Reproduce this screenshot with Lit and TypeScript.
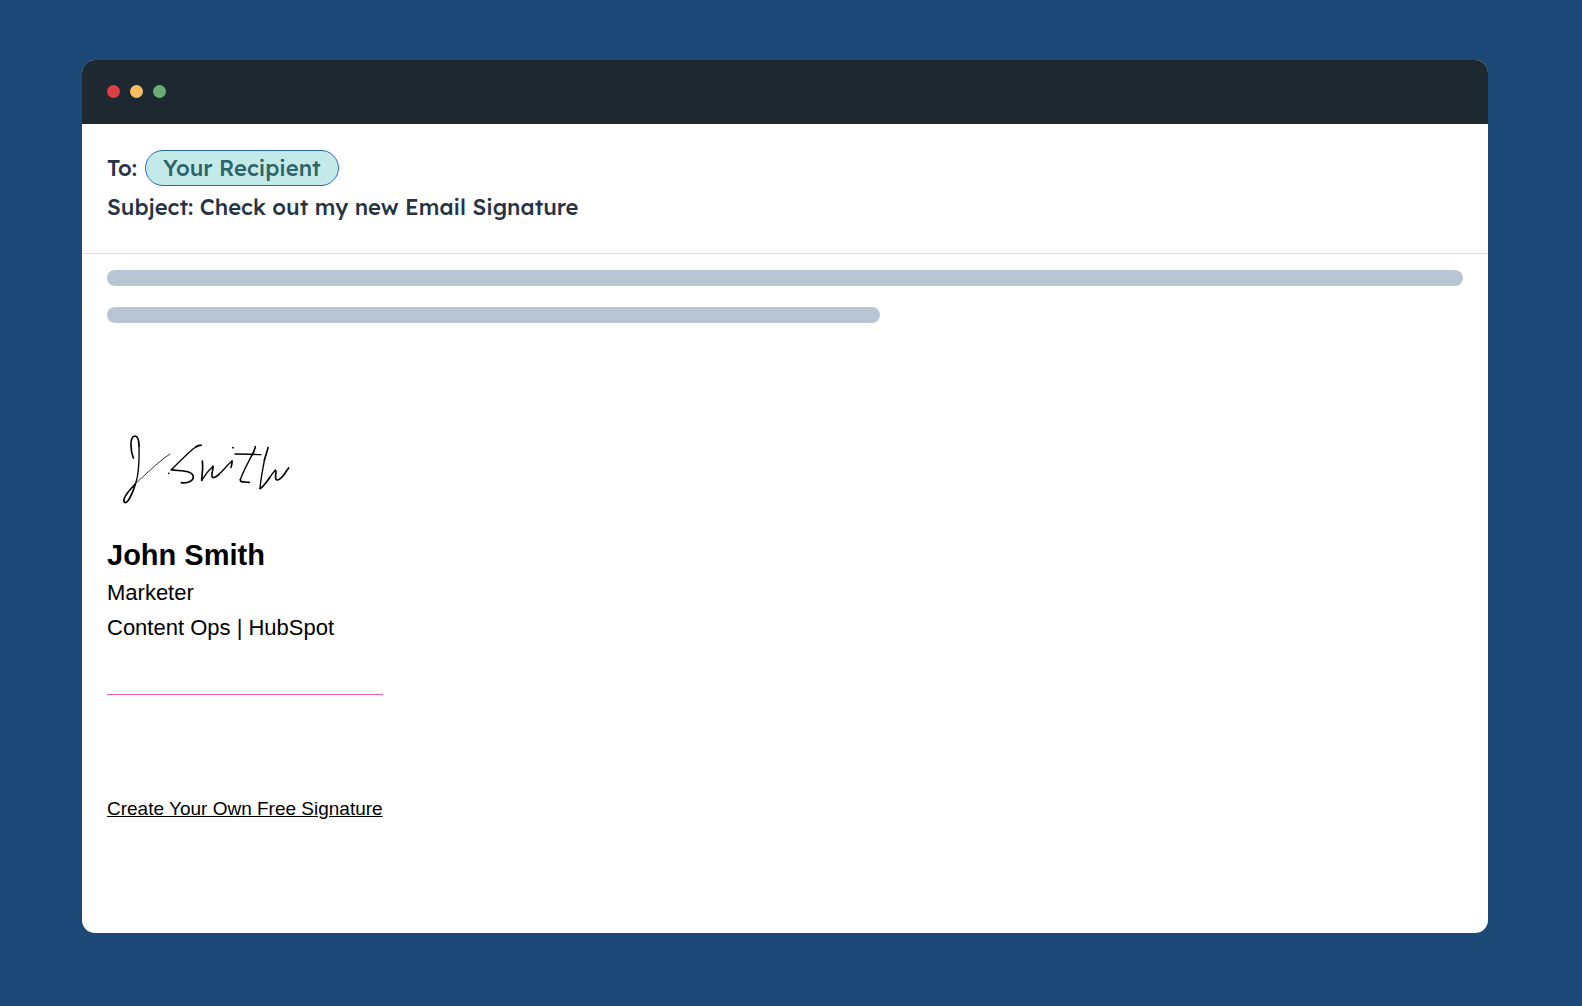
import { LitElement, html, css } from "lit";
import { customElement } from "lit/decorators.js";

@customElement("signature-drawing")
export class SignatureDrawing extends LitElement {
  static styles = css`
    :host {
      display: block;
    }
    .ink {
      display: block;
      width: 185px;
      height: 80px;
      fill: none;
      stroke: #000;
      stroke-linecap: round;
      stroke-linejoin: round;
    }
    .thick {
      stroke-width: 5;
    }
    .medium {
      stroke-width: 4;
    }
    .thin {
      stroke-width: 2.4;
    }
    .dot {
      fill: #000;
      stroke: none;
    }
  `;

  render() {
    return html`
      <svg class="ink" viewBox="0 0 555 240" role="img" aria-label="J Smith">
        <path class="thick" d="M55 84C51 74 48 62 48 46C47 29 52 18 60 18C69 19 72 31 72 48" />
        <path class="medium" d="M72 46C73 80 71 115 68 135C66 147 64 154 61 162" />
        <path class="thick" d="M61 162C55 183 48 199 39 212C32 221 25 219 27 208C30 195 44 179 61 162" />
        <path class="thin" d="M52 170C76 147 115 111 138 92C148 84 157 77 165 72" />
        <circle class="dot" cx="161" cy="130" r="2.6" />
        <path class="medium" d="M258 46C250 45 243 50 234 57C215 73 190 98 169 119" />
        <path class="thick" d="M258 46C253 45 247 47 242 51M169 119C180 122 191 121 206 123C222 125 234 130 235 140C236 152 220 161 199 158" />
        <path class="thick" d="M262 93C265 112 261 132 260 151" />
        <path class="medium" d="M260 151C269 136 281 121 294 109" />
        <path class="thick" d="M294 109C296 116 288 132 291 139C294 147 303 141 312 133" />
        <path class="medium" d="M312 133C325 121 336 106 351 93" />
        <path class="thick" d="M351 93C352 100 350 106 348 112" />
        <circle class="dot" cx="354" cy="53" r="2.8" />
        <path class="thick" d="M421 50C420 58 415 68 409 79" />
        <path class="medium" d="M409 79C396 103 383 128 376 149" />
        <path class="thick" d="M376 149C374 158 388 155 403 157" />
        <path class="medium" d="M360 72C385 72 410 73 438 74" />
        <path class="thick" d="M459 53C457 64 451 78 448 92" />
        <path class="medium" d="M448 92C443 120 437 148 435 175" />
        <path class="thick" d="M435 176C443 172 454 157 464 143" />
        <path class="medium" d="M464 143C470 134 475 127 481 121" />
        <path class="thick" d="M481 121C487 123 478 141 483 148C488 155 501 143 509 131C513 125 517 119 521 114" />
      </svg>
    `;
  }
}

@customElement("app-root")
export class AppRoot extends LitElement {
  static styles = css`
    :host {
      display: block;
      box-sizing: border-box;
      min-height: 100vh;
      padding: 60px 94px 73px 82px;
      background: #1c4878;
      font-family: "Liberation Sans", Arial, sans-serif;
      color: #000;
    }
    .window {
      overflow: hidden;
      border-radius: 13px;
      background: #fff;
    }
    .titlebar {
      display: flex;
      align-items: center;
      gap: 10px;
      height: 64px;
      padding: 0 25px 2px;
      box-sizing: border-box;
      background: #1e2831;
    }
    .light {
      width: 13px;
      height: 13px;
      border-radius: 50%;
    }
    .close {
      background: #dd4047;
    }
    .minimize {
      background: #f5bf60;
    }
    .expand {
      background: #69af75;
    }
    .envelope {
      display: flex;
      flex-direction: column;
      gap: 6px;
      padding: 26px 25px 31px;
      border-bottom: 1px solid #dae0e9;
      font-family: "Lexend Deca", Inter, sans-serif;
      font-size: 22px;
      font-weight: 500;
      line-height: 30px;
      color: #253444;
    }
    .to {
      display: flex;
      align-items: center;
      gap: 8px;
    }
    .recipient {
      padding: 2px 17px;
      border: 1px solid #2c6ab1;
      border-radius: 18px;
      background: #c3eae9;
      color: #2d6467;
    }
    .message {
      padding: 16px 25px 112px;
    }
    .placeholder {
      height: 16px;
      border-radius: 8px;
      background: #b8c6d4;
    }
    .short {
      width: 57%;
      margin-top: 21px;
    }
    .signature {
      display: grid;
      width: max-content;
      margin-top: 107px;
    }
    .drawing {
      margin: 0 0 27px 8px;
    }
    .name {
      margin: 0 0 2px;
      font-size: 29px;
      font-weight: 700;
      line-height: 36px;
    }
    .detail {
      margin: 0;
      font-size: 22px;
      line-height: 35px;
    }
    .rule {
      width: 100%;
      height: 1px;
      margin: 49px 0 102px;
      border: 0;
      background: #f2629a;
    }
    .create {
      font-size: 19px;
      line-height: 24px;
      color: #000;
    }
  `;

  render() {
    return html`
      <main class="window">
        <div class="titlebar">
          <span class="light close"></span>
          <span class="light minimize"></span>
          <span class="light expand"></span>
        </div>
        <header class="envelope">
          <div class="to">
            <span>To:</span>
            <span class="recipient">Your Recipient</span>
          </div>
          <div>Subject: Check out my new Email Signature</div>
        </header>
        <section class="message">
          <div class="placeholder"></div>
          <div class="placeholder short"></div>
          <div class="signature">
            <signature-drawing class="drawing"></signature-drawing>
            <h1 class="name">John Smith</h1>
            <p class="detail">Marketer</p>
            <p class="detail">Content Ops | HubSpot</p>
            <hr class="rule" />
            <a class="create" href="#create">Create Your Own Free Signature</a>
          </div>
        </section>
      </main>
    `;
  }
}
